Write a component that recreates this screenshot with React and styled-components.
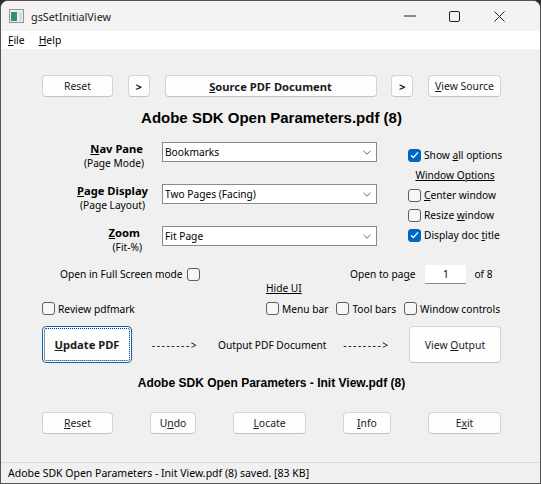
import React from 'react';
import styled, { createGlobalStyle } from 'styled-components';

const Global = createGlobalStyle`
  html, body { margin: 0; padding: 0; background: #2b2b2b; }
  body {
    font-family: "Noto Sans", "Open Sans", sans-serif;
    font-size: 10.2px;
    color: #000;
  }
  #root { width: 541px; height: 484px; }
`;

const Window = styled.div`
  width: 541px;
  height: 484px;
  box-sizing: border-box;
  background: #f0f0f0;
  border: 1px solid #555;
  border-radius: 8px 8px 0 0;
  overflow: hidden;
  display: flex;
  flex-direction: column;
`;

const TitleBar = styled.div`
  height: 30px;
  flex: none;
  display: flex;
  align-items: center;
  background: #f3f3f3;
  padding-left: 8px;
`;

const TitleText = styled.span`
  margin-left: 7px;
  font-size: 10.8px;
  color: #1a1a1a;
  flex: 1;
`;

const Caption = styled.div`
  width: 45px;
  height: 30px;
  display: flex;
  align-items: center;
  justify-content: center;
`;

const CaptionGroup = styled.div`
  display: flex;
  padding-right: 18px;
`;

const MenuBar = styled.div`
  height: 18px;
  flex: none;
  background: #fff;
  display: flex;
  align-items: center;
  gap: 14px;
  padding-left: 7px;
`;

const MenuItem = styled.span`
  font-size: 10.4px;
`;

const Client = styled.div`
  flex: 1;
  display: flex;
  flex-direction: column;
  padding: 0 39px 0 41px;
`;

const SpreadRow = styled.div`
  display: flex;
  justify-content: space-between;
  align-items: center;
  margin-top: ${p => p.$mt}px;
  height: ${p => p.$h}px;
`;

const Button = styled.div`
  box-sizing: border-box;
  width: ${p => p.$w}px;
  height: ${p => p.$h || 22}px;
  display: flex;
  align-items: center;
  justify-content: center;
  background: #fdfdfd;
  border: 1px solid #d3d3d3;
  border-bottom-color: #c2c2c2;
  border-radius: 4px;
  font-weight: ${p => (p.$bold ? 700 : 400)};
  font-size: ${p => (p.$bold ? 11.2 : 10.4)}px;
  color: #1b1b1b;
  white-space: nowrap;
`;

const DefaultButton = styled(Button)`
  border: 1.5px solid #0067c0;
  padding: 1px;
  & > span {
    flex: 1;
    align-self: stretch;
    display: flex;
    align-items: center;
    justify-content: center;
    border: 1px dotted #222;
    border-radius: 2px;
  }
`;

const DocTitle = styled.div`
  text-align: center;
  font-family: "Liberation Sans", Arial, sans-serif;
  font-weight: 700;
  font-size: ${p => p.$size}px;
  line-height: 18px;
  margin-top: ${p => p.$mt}px;
`;

const Options = styled.div`
  display: flex;
  margin-top: 15px;
  gap: 31px;
`;

const ParamGrid = styled.div`
  display: grid;
  grid-template-columns: 106px 215px;
  grid-auto-rows: 30px;
  column-gap: 14px;
  row-gap: 12px;
`;

const ParamLabel = styled.div`
  text-align: right;
  line-height: 14px;
  white-space: nowrap;
`;

const ParamTitle = styled.b`
  display: block;
  font-weight: 700;
  font-size: 11.2px;
  padding-right: ${p => p.$pr}px;
`;

const ParamSub = styled.span`
  display: block;
  padding-right: ${p => p.$pr}px;
`;

const Combo = styled.div`
  box-sizing: border-box;
  height: 20px;
  background: #fff;
  border: 1px solid #8b8b8b;
  display: flex;
  align-items: center;
  justify-content: space-between;
  padding: 0 5px 0 2px;
`;

const OptionCol = styled.div`
  display: flex;
  flex-direction: column;
  padding-top: 3px;
  width: 94px;
`;

const OptionItem = styled.label`
  height: 20px;
  display: flex;
  align-items: center;
  gap: 3px;
  white-space: nowrap;
  justify-content: ${p => (p.$center ? 'center' : 'flex-start')};
`;

const Box = styled.span`
  box-sizing: border-box;
  width: 13px;
  height: 13px;
  flex: none;
  border-radius: 3px;
  border: 1px solid ${p => (p.$on ? '#0067c0' : '#5d5d5d')};
  background: ${p => (p.$on ? '#0067c0' : '#f7f7f7')};
  display: inline-flex;
  align-items: center;
  justify-content: center;
`;

const LowerGrid = styled.div`
  display: grid;
  grid-template-columns: 224px 1fr;
  margin-top: 8px;
`;

const Cell = styled.div`
  display: flex;
  align-items: center;
  height: ${p => p.$h}px;
  padding-left: ${p => p.$pl || 0}px;
  margin-top: ${p => p.$mt || 0}px;
  gap: ${p => p.$gap || 0}px;
  white-space: nowrap;
`;

const PageInput = styled.div`
  box-sizing: border-box;
  width: 41px;
  height: 19px;
  margin: 0 8px 0 10px;
  background: #fff;
  border-bottom: 1px solid #8a8a8a;
  display: flex;
  align-items: center;
  justify-content: center;
`;

const Arrow = styled.span`
  width: ${p => p.$w}px;
  white-space: nowrap;
  text-align: center;
  letter-spacing: ${p => (p.$dash ? 1.6 : 0)}px;
`;

const StatusBar = styled.div`
  height: 20px;
  flex: none;
  border-top: 1px solid #dadada;
  display: flex;
  align-items: center;
  padding-left: 7px;
  font-size: 10.5px;
`;

const Check = () => (
  <svg width="9" height="8" viewBox="0 0 9 8">
    <path d="M1 4.2 L3.4 6.5 L8 1.4" fill="none" stroke="#fff" strokeWidth="1.3" />
  </svg>
);

const Chevron = () => (
  <svg width="8" height="5" viewBox="0 0 8 5">
    <path d="M0.5 0.8 L4 4.2 L7.5 0.8" fill="none" stroke="#666" strokeWidth="1" />
  </svg>
);

const CheckBox = ({ on, children }) => (
  <OptionItem>
    <Box $on={on}>{on && <Check />}</Box>
    <span>{children}</span>
  </OptionItem>
);

const params = [
  { title: <><u>N</u>av Pane</>, sub: '(Page Mode)', value: 'Bookmarks', tp: 5, sp: 4 },
  { title: <><u>P</u>age Display</>, sub: '(Page Layout)', value: 'Two Pages (Facing)', tp: 0, sp: 3 },
  { title: <><u>Z</u>oom</>, sub: '(Fit-%)', value: 'Fit Page', tp: 8, sp: 6 },
];

export default function App() {
  return (
    <>
      <Global />
      <Window>
        <TitleBar>
          <svg width="15" height="14" viewBox="0 0 15 14">
            <rect x="0.5" y="0.5" width="14" height="13" fill="#eceff0" stroke="#8c9496" />
            <rect x="2" y="3" width="6" height="9" fill="#3d8a76" />
            <rect x="10" y="3" width="3" height="9" fill="#d7dcdc" />
          </svg>
          <TitleText>gsSetInitialView</TitleText>
          <CaptionGroup>
            <Caption>
              <svg width="12" height="2" viewBox="0 0 12 2"><path d="M0 1 H12" stroke="#222" strokeWidth="1" /></svg>
            </Caption>
            <Caption>
              <svg width="11" height="11" viewBox="0 0 11 11"><rect x="0.5" y="0.5" width="10" height="10" rx="1.5" fill="none" stroke="#222" /></svg>
            </Caption>
            <Caption>
              <svg width="11" height="11" viewBox="0 0 11 11"><path d="M0.5 0.5 L10.5 10.5 M10.5 0.5 L0.5 10.5" stroke="#222" strokeWidth="1" /></svg>
            </Caption>
          </CaptionGroup>
        </TitleBar>
        <MenuBar>
          <MenuItem><u>F</u>ile</MenuItem>
          <MenuItem><u>H</u>elp</MenuItem>
        </MenuBar>
        <Client>
          <SpreadRow $mt={26} $h={22}>
            <Button $w={71}>Reset</Button>
            <Button $w={22} $bold>&gt;</Button>
            <Button $w={212} $bold><span><u>S</u>ource PDF Document</span></Button>
            <Button $w={22} $bold>&gt;</Button>
            <Button $w={73}><span><u>V</u>iew Source</span></Button>
          </SpreadRow>
          <DocTitle $mt={12} $size={15}>Adobe SDK Open Parameters.pdf (8)</DocTitle>
          <Options>
            <ParamGrid>
              {params.map((p, i) => (
                <React.Fragment key={i}>
                  <ParamLabel>
                    <ParamTitle $pr={p.tp}>{p.title}</ParamTitle>
                    <ParamSub $pr={p.sp}>{p.sub}</ParamSub>
                  </ParamLabel>
                  <Combo>
                    <span>{p.value}</span>
                    <Chevron />
                  </Combo>
                </React.Fragment>
              ))}
            </ParamGrid>
            <OptionCol>
              <CheckBox on>Show <u>a</u>ll options</CheckBox>
              <OptionItem $center><u>Window Options</u></OptionItem>
              <CheckBox><u>C</u>enter window</CheckBox>
              <CheckBox>Resize <u>w</u>indow</CheckBox>
              <CheckBox on>Display doc <u>t</u>itle</CheckBox>
            </OptionCol>
          </Options>
          <LowerGrid>
            <Cell $h={20} $pl={18} $gap={4}>
              <span>Open in Full Screen mode</span>
              <Box />
            </Cell>
            <Cell $h={20} $pl={84}>
              <span>Open to pa<u>g</u>e</span>
              <PageInput>1</PageInput>
              <span>of 8</span>
            </Cell>
            <Cell $h={14} $mt={-3} />
            <Cell $h={14} $mt={-3}><u>Hide UI</u></Cell>
            <Cell $h={19} $mt={4}>
              <CheckBox>Review pdfmark</CheckBox>
            </Cell>
            <Cell $h={19} $mt={4} $gap={8}>
              <CheckBox>Menu bar</CheckBox>
              <CheckBox>Tool bars</CheckBox>
              <CheckBox>Window controls</CheckBox>
            </Cell>
          </LowerGrid>
          <SpreadRow $mt={8} $h={37}>
            <DefaultButton $w={90} $h={37} $bold><span><span><u>U</u>pdate PDF</span></span></DefaultButton>
            <Arrow $w={48} $dash>--------&gt;</Arrow>
            <Arrow $w={106}>Output PDF Document</Arrow>
            <Arrow $w={47} $dash>--------&gt;</Arrow>
            <Button $w={92} $h={37}><span>View <u>O</u>utput</span></Button>
          </SpreadRow>
          <DocTitle $mt={11} $size={12}>Adobe SDK Open Parameters - Init View.pdf (8)</DocTitle>
          <SpreadRow $mt={20} $h={22}>
            <Button $w={71}><span><u>R</u>eset</span></Button>
            <Button $w={46}><span>U<u>n</u>do</span></Button>
            <Button $w={73}><span><u>L</u>ocate</span></Button>
            <Button $w={48}><span><u>I</u>nfo</span></Button>
            <Button $w={73}><span>E<u>x</u>it</span></Button>
          </SpreadRow>
        </Client>
        <StatusBar>Adobe SDK Open Parameters - Init View.pdf (8) saved. [83 KB]</StatusBar>
      </Window>
    </>
  );
}
